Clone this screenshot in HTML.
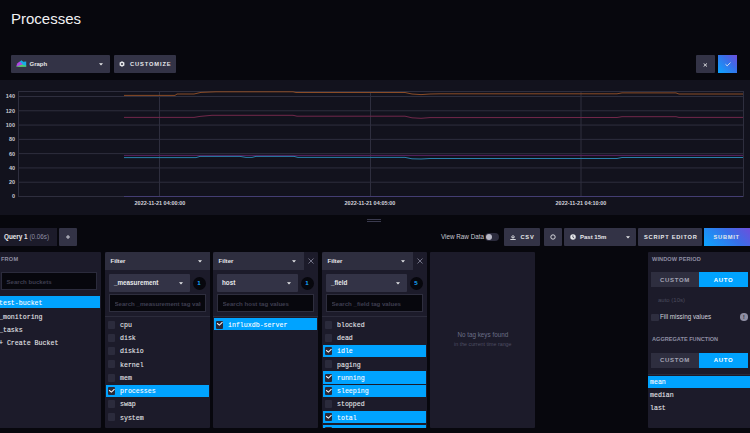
<!DOCTYPE html>
<html><head><meta charset="utf-8">
<style>
*{box-sizing:border-box;margin:0;padding:0}
html,body{width:750px;height:433px;overflow:hidden;background:#07070d;font-family:"Liberation Sans",sans-serif;color:#e7e8eb}
.a{position:absolute}
.btn{position:absolute;background:#333346;border-radius:1px}
.t{position:absolute;white-space:nowrap;line-height:1}
.mono{font-family:"Liberation Mono",monospace}
.cap{font-weight:bold;text-transform:uppercase;letter-spacing:0.6px}
.panel{position:absolute;background:#1c1b2a;top:252px;height:176px;border-radius:1px}
.sel{position:absolute;background:#00a3ff}
.cb{position:absolute;width:8px;height:8px;background:#2b2b3c;border-radius:1px}
.item{position:absolute;font-family:"Liberation Mono",monospace;font-size:6.6px;font-weight:normal;-webkit-text-stroke:0.08px currentColor;color:#e7e8eb;line-height:1;white-space:nowrap}
</style></head><body>

<!-- Title -->
<div class="t" style="left:11px;top:11px;font-size:15px;color:#f1f1f3">Processes</div>

<!-- Graph dropdown -->
<div class="btn" style="left:11px;top:55px;width:99px;height:18px"></div>
<svg class="a" style="left:16px;top:60.2px" width="11" height="7" viewBox="0 0 11 7">
  <path d="M3.5 1.8 L5.5 0.3 L7.2 1.8 L10.2 1.4 L10.2 6.6 L3.5 6.6Z" fill="#17ade6"/>
  <path d="M0.3 6.2 L1.2 3.6 L3 2 L4.2 1.8 L5.8 3.4 L7 5 L5 6.6 L0.3 6.6Z" fill="#b048e6"/>
  <path d="M0.5 6.6 L2.8 5.7 L4.8 5 L6.2 4.4 L8 5.5 L10.2 5.4 L10.2 6.8 L0.3 6.8Z" fill="#58d060"/>
</svg>
<div class="t" style="left:29.5px;top:61px;font-size:6px;font-weight:bold">Graph</div>
<svg class="a" style="left:98.5px;top:62.5px" width="4" height="3"><path d="M0 0.3 L4 0.3 L2 2.6Z" fill="#e7e8eb"/></svg>

<!-- Customize -->
<div class="btn" style="left:114px;top:55px;width:62px;height:18px"></div>
<svg class="a" style="left:119px;top:61px" width="6" height="6" viewBox="0 0 6 6"><path d="M3 0.2 L5.4 1.6 L5.4 4.4 L3 5.8 L0.6 4.4 L0.6 1.6Z" fill="#e7e8eb"/><circle cx="3" cy="3" r="1" fill="#333346"/></svg>
<div class="t cap" style="left:130px;top:61.9px;font-size:5.7px;letter-spacing:0.9px">Customize</div>

<!-- cancel / confirm -->
<div class="btn" style="left:696px;top:55px;width:19px;height:18px"></div>
<svg class="a" style="left:703px;top:62.5px" width="5" height="4"><path d="M0.6 0.4 L4 3.6 M4 0.4 L0.6 3.6" stroke="#e7e8eb" stroke-width="0.9"/></svg>
<div class="a" style="left:718px;top:55px;width:19px;height:18px;background:linear-gradient(45deg,#0ba6ff 0%,#3a6ee8 60%,#6d4fdc 100%)"></div>
<svg class="a" style="left:724.5px;top:62.3px" width="6" height="5"><path d="M0.5 2.3 L2.2 3.8 L5.5 0.6" stroke="#e7e8eb" stroke-width="0.9" fill="none"/></svg>

<!-- Graph area -->
<div class="a" style="left:0;top:80px;width:750px;height:135px;background:#12121d"></div>

<svg class="a" style="left:0;top:0" width="750" height="433">
  <g stroke="#2e2e3e" stroke-width="1" fill="none">
    <rect x="18.5" y="91.5" width="725" height="105"/>
    <line x1="18" y1="96.50" x2="744" y2="96.50"/>
    <line x1="18" y1="110.79" x2="744" y2="110.79"/>
    <line x1="18" y1="125.07" x2="744" y2="125.07"/>
    <line x1="18" y1="139.36" x2="744" y2="139.36"/>
    <line x1="18" y1="153.64" x2="744" y2="153.64"/>
    <line x1="18" y1="167.93" x2="744" y2="167.93"/>
    <line x1="18" y1="182.21" x2="744" y2="182.21"/>
    <line x1="159.5" y1="91" x2="159.5" y2="197"/>
    <line x1="370.5" y1="91" x2="370.5" y2="197"/>
    <line x1="581" y1="91" x2="581" y2="197"/>
  </g>
  <g fill="none" stroke-width="1">
    <path stroke="#8a4c26" d="M124 95.4 L175 95.4 L177 94 L194 94 L201 92.4 L216 91.8 L293 91.8 L296 92.5 L405 92.5 L412 94 L421 94.6 L430 94 L440 93.8 L617 93.8 L622 92.9 L676 92.9 L679 94 L743 94"/>
    <path stroke="#72284a" d="M124 117.4 L194 117.4 L200 116.4 L212 115.3 L293 115.3 L297 116.2 L405 116.2 L412 117.8 L421 118.3 L430 117.6 L617 117.5 L622 116.7 L676 116.7 L679 117.4 L743 117.4"/>
    <path stroke="#5a2260" d="M124 155.4 L743 155.4"/>
    <path stroke="#2a7fab" d="M124 157.6 L196 157.6 L200 156.4 L240 156.4 L246 157.4 L252 157.4 L256 156.4 L294 156.4 L298 157.4 L405 157.4 L412 158.8 L421 159 L430 158.5 L617 158.5 L622 157.5 L743 157.5"/>
    <path stroke="#433d72" d="M124 196.5 L743 196.5"/>
  </g>
</svg>

<!-- Y labels -->
<div class="t" style="left:0;width:15px;text-align:right;top:94.1px;font-size:5.5px;font-weight:bold;color:#c9cad3">140</div>
<div class="t" style="left:0;width:15px;text-align:right;top:108.6px;font-size:5.5px;font-weight:bold;color:#c9cad3">120</div>
<div class="t" style="left:0;width:15px;text-align:right;top:123.1px;font-size:5.5px;font-weight:bold;color:#c9cad3">100</div>
<div class="t" style="left:0;width:15px;text-align:right;top:137.1px;font-size:5.5px;font-weight:bold;color:#c9cad3">80</div>
<div class="t" style="left:0;width:15px;text-align:right;top:151.6px;font-size:5.5px;font-weight:bold;color:#c9cad3">60</div>
<div class="t" style="left:0;width:15px;text-align:right;top:165.6px;font-size:5.5px;font-weight:bold;color:#c9cad3">40</div>
<div class="t" style="left:0;width:15px;text-align:right;top:180.1px;font-size:5.5px;font-weight:bold;color:#c9cad3">20</div>
<div class="t" style="left:0;width:15px;text-align:right;top:194.1px;font-size:5.5px;font-weight:bold;color:#c9cad3">0</div>

<!-- X labels -->
<div class="t" style="left:110px;width:100px;text-align:center;top:201.4px;font-size:5.45px;font-weight:bold;color:#d2d2dc">2022-11-21 04:00:00</div>
<div class="t" style="left:320px;width:100px;text-align:center;top:201.4px;font-size:5.45px;font-weight:bold;color:#d2d2dc">2022-11-21 04:05:00</div>
<div class="t" style="left:531px;width:100px;text-align:center;top:201.4px;font-size:5.45px;font-weight:bold;color:#d2d2dc">2022-11-21 04:10:00</div>

<!-- handle -->
<div class="a" style="left:367px;top:219px;width:14px;height:1px;background:#3a3a4e"></div>
<div class="a" style="left:367px;top:221px;width:14px;height:1px;background:#3a3a4e"></div>

<!-- Query tabs -->
<div class="a" style="left:0;top:228px;width:57px;height:18px;background:#1c1b2a"></div>
<div class="t" style="left:4px;top:234.2px;font-size:6.35px;font-weight:bold">Query 1 <span style="font-weight:normal;color:#8e8ea3">(0.06s)</span></div>
<div class="btn" style="left:59px;top:228px;width:18px;height:18px"></div>
<svg class="a" style="left:66px;top:235px" width="4" height="4"><path d="M2 0 V4 M0 2 H4" stroke="#c9cad3" stroke-width="1"/></svg>

<!-- toolbar right -->
<div class="t" style="left:441px;top:234px;font-size:6.3px;color:#c9cad3">View Raw Data</div>
<div class="a" style="left:484.5px;top:233.3px;width:14px;height:8px;border-radius:4px;background:#2b2b3c"></div>
<div class="a" style="left:485.5px;top:234.3px;width:6px;height:6px;border-radius:3px;background:#b9b9c6"></div>

<div class="btn" style="left:504px;top:228px;width:36px;height:18px"></div>
<svg class="a" style="left:510px;top:235px" width="6" height="5"><path d="M3 0 V3 M1 1.5 L3 3.3 L5 1.5 M0.3 4.5 H5.7" stroke="#e7e8eb" stroke-width="0.9" fill="none"/></svg>
<div class="t cap" style="left:520.5px;top:234.6px;font-size:5.7px;letter-spacing:0.75px">CSV</div>

<div class="btn" style="left:544px;top:228px;width:18px;height:18px"></div>
<svg class="a" style="left:549.6px;top:234.4px" width="6" height="6"><circle cx="3" cy="3" r="2.2" stroke="#e7e8eb" stroke-width="0.9" fill="none"/></svg>

<div class="btn" style="left:564px;top:228px;width:72px;height:18px"></div>
<svg class="a" style="left:569.6px;top:234.4px" width="6" height="6"><circle cx="3" cy="3" r="2.75" fill="#e7e8eb"/><path d="M2.9 1.4 V3.2 L4.3 4.1" stroke="#333346" stroke-width="0.8" fill="none"/></svg>
<div class="t" style="left:580px;top:234px;font-size:6px;font-weight:bold">Past 15m</div>
<svg class="a" style="left:625.5px;top:236px" width="4" height="3"><path d="M0 0.3 L4 0.3 L2 2.6Z" fill="#e7e8eb"/></svg>

<div class="btn" style="left:638px;top:228px;width:64px;height:18px"></div>
<div class="t cap" style="left:644px;top:234.6px;font-size:5.7px;letter-spacing:0.75px">Script Editor</div>

<div class="a" style="left:704px;top:228px;width:46px;height:18px;background:linear-gradient(45deg,#0ba6ff 0%,#3a6ee8 60%,#6d4fdc 100%)"></div>
<div class="t cap" style="left:713.5px;top:234.6px;font-size:5.7px;letter-spacing:0.75px">Submit</div>

<div class="panel" style="left:-4px;width:105px"></div>
<div class="t cap" style="left:1px;top:257px;font-size:5.6px;color:#8e8ea3;letter-spacing:0.2px">From</div>
<div class="a" style="left:1px;top:272px;width:96px;height:18px;background:#07070d;border:1px solid #2b2b3c"></div>
<div class="t" style="left:6.5px;top:279px;font-size:6.1px;font-weight:bold;color:#3e3e50">Search buckets</div>
<div class="sel" style="left:-4px;top:296px;width:104px;height:12.4px"></div>
<div class="item" style="left:-1px;top:301.40px;color:#fff">test-bucket</div>
<div class="item" style="left:-1px;top:314.68px;">_monitoring</div>
<div class="item" style="left:-1px;top:327.96px;">_tasks</div>
<div class="item" style="left:-1px;top:341.24px;">+ Create Bucket</div>
<div class="panel" style="left:105px;width:105px"></div>
<div class="a" style="left:105px;top:252px;width:105px;height:18px;background:#2e2e3f;border-radius:2px 0 0 0"></div>
<div class="t" style="left:110.5px;top:258.3px;font-size:6.1px;font-weight:bold">Filter</div>
<svg class="a" style="left:198px;top:259.5px" width="4" height="3"><path d="M0 0.3 L4 0.3 L2 2.6Z" fill="#e7e8eb"/></svg>
<div class="btn" style="left:109px;top:274px;width:81px;height:18px"></div>
<div class="t" style="left:114px;top:280px;font-size:6.3px;font-weight:bold">_measurement</div>
<svg class="a" style="left:178.5px;top:281.5px" width="4" height="3"><path d="M0 0.3 L4 0.3 L2 2.6Z" fill="#e7e8eb"/></svg>
<div class="a" style="left:192.5px;top:276.5px;width:13px;height:13px;border-radius:50%;background:#07070d"></div>
<div class="t" style="left:192.5px;width:13px;text-align:center;top:280.2px;font-size:6.2px;font-weight:bold;color:#14a8ff">1</div>
<div class="a" style="left:109px;top:294px;width:97px;height:18px;background:#07070d;border:1px solid #2e2e3e"></div>
<div class="t" style="left:114.5px;top:300.6px;font-size:6.1px;font-weight:bold;color:#3e3e50;overflow:hidden;width:86.5px">Search _measurement tag values</div>
<div class="a" style="left:105px;top:316px;width:105px;height:1px;background:#2b2b3b"></div>
<div class="cb" style="left:107.9px;width:7.2px;top:320.50px;background:#2b2b3c"></div>
<div class="item" style="left:120px;top:322.70px;">cpu</div>
<div class="cb" style="left:107.9px;width:7.2px;top:333.78px;background:#2b2b3c"></div>
<div class="item" style="left:120px;top:335.98px;">disk</div>
<div class="cb" style="left:107.9px;width:7.2px;top:347.06px;background:#2b2b3c"></div>
<div class="item" style="left:120px;top:349.26px;">diskio</div>
<div class="cb" style="left:107.9px;width:7.2px;top:360.34px;background:#2b2b3c"></div>
<div class="item" style="left:120px;top:362.54px;">kernel</div>
<div class="cb" style="left:107.9px;width:7.2px;top:373.62px;background:#2b2b3c"></div>
<div class="item" style="left:120px;top:375.82px;">mem</div>
<div class="sel" style="left:106px;top:384.70px;width:103px;height:12.2px"></div>
<div class="cb" style="left:107.9px;width:7.2px;top:386.90px;background:#2a2937"></div>
<svg class="a" style="left:108px;top:387.70px" width="7" height="6"><path d="M1.1 2.3 L3.4 4.1 L6.5 1.2" stroke="#f4f4f6" stroke-width="1.1" fill="none"/></svg>
<div class="item" style="left:120px;top:389.10px;color:#fff">processes</div>
<div class="cb" style="left:107.9px;width:7.2px;top:400.18px;background:#2b2b3c"></div>
<div class="item" style="left:120px;top:402.38px;">swap</div>
<div class="cb" style="left:107.9px;width:7.2px;top:413.46px;background:#2b2b3c"></div>
<div class="item" style="left:120px;top:415.66px;">system</div>
<div class="panel" style="left:213px;width:105px"></div>
<div class="a" style="left:213px;top:252px;width:91px;height:18px;background:#2e2e3f;border-radius:2px 0 0 0"></div>
<div class="t" style="left:218.5px;top:258.3px;font-size:6.1px;font-weight:bold">Filter</div>
<svg class="a" style="left:292px;top:259.5px" width="4" height="3"><path d="M0 0.3 L4 0.3 L2 2.6Z" fill="#e7e8eb"/></svg>
<svg class="a" style="left:308px;top:258px" width="6" height="6"><path d="M0.5 0.5 L5.5 5.5 M5.5 0.5 L0.5 5.5" stroke="#8a8a9e" stroke-width="0.8"/></svg>
<div class="btn" style="left:217px;top:274px;width:81px;height:18px"></div>
<div class="t" style="left:222px;top:280px;font-size:6.3px;font-weight:bold">host</div>
<svg class="a" style="left:286.5px;top:281.5px" width="4" height="3"><path d="M0 0.3 L4 0.3 L2 2.6Z" fill="#e7e8eb"/></svg>
<div class="a" style="left:300.5px;top:276.5px;width:13px;height:13px;border-radius:50%;background:#07070d"></div>
<div class="t" style="left:300.5px;width:13px;text-align:center;top:280.2px;font-size:6.2px;font-weight:bold;color:#14a8ff">1</div>
<div class="a" style="left:217px;top:294px;width:97px;height:18px;background:#07070d;border:1px solid #2e2e3e"></div>
<div class="t" style="left:222.5px;top:300.6px;font-size:6.1px;font-weight:bold;color:#3e3e50;overflow:hidden;width:86.5px">Search host tag values</div>
<div class="a" style="left:213px;top:316px;width:105px;height:1px;background:#2b2b3b"></div>
<div class="sel" style="left:214px;top:318.30px;width:103px;height:12.2px"></div>
<div class="cb" style="left:215.9px;width:7.2px;top:320.50px;background:#2a2937"></div>
<svg class="a" style="left:216px;top:321.30px" width="7" height="6"><path d="M1.1 2.3 L3.4 4.1 L6.5 1.2" stroke="#f4f4f6" stroke-width="1.1" fill="none"/></svg>
<div class="item" style="left:228px;top:322.70px;color:#fff">influxdb-server</div>
<div class="panel" style="left:322px;width:105px"></div>
<div class="a" style="left:322px;top:252px;width:91px;height:18px;background:#2e2e3f;border-radius:2px 0 0 0"></div>
<div class="t" style="left:327.5px;top:258.3px;font-size:6.1px;font-weight:bold">Filter</div>
<svg class="a" style="left:401px;top:259.5px" width="4" height="3"><path d="M0 0.3 L4 0.3 L2 2.6Z" fill="#e7e8eb"/></svg>
<svg class="a" style="left:417px;top:258px" width="6" height="6"><path d="M0.5 0.5 L5.5 5.5 M5.5 0.5 L0.5 5.5" stroke="#8a8a9e" stroke-width="0.8"/></svg>
<div class="btn" style="left:326px;top:274px;width:81px;height:18px"></div>
<div class="t" style="left:331px;top:280px;font-size:6.3px;font-weight:bold">_field</div>
<svg class="a" style="left:395.5px;top:281.5px" width="4" height="3"><path d="M0 0.3 L4 0.3 L2 2.6Z" fill="#e7e8eb"/></svg>
<div class="a" style="left:409.5px;top:276.5px;width:13px;height:13px;border-radius:50%;background:#07070d"></div>
<div class="t" style="left:409.5px;width:13px;text-align:center;top:280.2px;font-size:6.2px;font-weight:bold;color:#14a8ff">5</div>
<div class="a" style="left:326px;top:294px;width:97px;height:18px;background:#07070d;border:1px solid #2e2e3e"></div>
<div class="t" style="left:331.5px;top:300.6px;font-size:6.1px;font-weight:bold;color:#3e3e50;overflow:hidden;width:86.5px">Search _field tag values</div>
<div class="a" style="left:322px;top:316px;width:105px;height:1px;background:#2b2b3b"></div>
<div class="cb" style="left:324.9px;width:7.2px;top:320.50px;background:#2b2b3c"></div>
<div class="item" style="left:337px;top:322.70px;">blocked</div>
<div class="cb" style="left:324.9px;width:7.2px;top:333.78px;background:#2b2b3c"></div>
<div class="item" style="left:337px;top:335.98px;">dead</div>
<div class="sel" style="left:323px;top:344.86px;width:103px;height:12.2px"></div>
<div class="cb" style="left:324.9px;width:7.2px;top:347.06px;background:#2a2937"></div>
<svg class="a" style="left:325px;top:347.86px" width="7" height="6"><path d="M1.1 2.3 L3.4 4.1 L6.5 1.2" stroke="#f4f4f6" stroke-width="1.1" fill="none"/></svg>
<div class="item" style="left:337px;top:349.26px;color:#fff">idle</div>
<div class="cb" style="left:324.9px;width:7.2px;top:360.34px;background:#2b2b3c"></div>
<div class="item" style="left:337px;top:362.54px;">paging</div>
<div class="sel" style="left:323px;top:371.42px;width:103px;height:12.2px"></div>
<div class="cb" style="left:324.9px;width:7.2px;top:373.62px;background:#2a2937"></div>
<svg class="a" style="left:325px;top:374.42px" width="7" height="6"><path d="M1.1 2.3 L3.4 4.1 L6.5 1.2" stroke="#f4f4f6" stroke-width="1.1" fill="none"/></svg>
<div class="item" style="left:337px;top:375.82px;color:#fff">running</div>
<div class="sel" style="left:323px;top:384.70px;width:103px;height:12.2px"></div>
<div class="cb" style="left:324.9px;width:7.2px;top:386.90px;background:#2a2937"></div>
<svg class="a" style="left:325px;top:387.70px" width="7" height="6"><path d="M1.1 2.3 L3.4 4.1 L6.5 1.2" stroke="#f4f4f6" stroke-width="1.1" fill="none"/></svg>
<div class="item" style="left:337px;top:389.10px;color:#fff">sleeping</div>
<div class="cb" style="left:324.9px;width:7.2px;top:400.18px;background:#2b2b3c"></div>
<div class="item" style="left:337px;top:402.38px;">stopped</div>
<div class="sel" style="left:323px;top:411.26px;width:103px;height:12.2px"></div>
<div class="cb" style="left:324.9px;width:7.2px;top:413.46px;background:#2a2937"></div>
<svg class="a" style="left:325px;top:414.26px" width="7" height="6"><path d="M1.1 2.3 L3.4 4.1 L6.5 1.2" stroke="#f4f4f6" stroke-width="1.1" fill="none"/></svg>
<div class="item" style="left:337px;top:415.66px;color:#fff">total</div>
<div class="sel" style="left:323px;top:424.54px;width:103px;height:12.2px"></div>
<div class="cb" style="left:324.9px;width:7.2px;top:426.74px;background:#2a2937"></div>
<svg class="a" style="left:325px;top:427.54px" width="7" height="6"><path d="M1.1 2.3 L3.4 4.1 L6.5 1.2" stroke="#f4f4f6" stroke-width="1.1" fill="none"/></svg>
<div class="item" style="left:337px;top:428.94px;color:#fff">total_threads</div>
<div class="panel" style="left:430.3px;width:105px"></div>
<div class="t" style="left:430.3px;width:105px;text-align:center;top:332px;font-size:6.3px;color:#6b6f88">No tag keys found</div>
<div class="t" style="left:430.3px;width:105px;text-align:center;top:342.2px;font-size:5.3px;color:#4e4e62">in the current time range</div>
<div class="panel" style="left:648px;width:106px"></div>
<div class="t cap" style="left:652px;top:257px;font-size:5.6px;color:#8e8ea3;letter-spacing:0.1px">Window Period</div>
<div class="a" style="left:651px;top:272px;width:48px;height:15px;background:#2e2e3f"></div>
<div class="a" style="left:699px;top:272px;width:49px;height:15px;background:#00a3ff"></div>
<div class="t cap" style="left:651px;width:48px;text-align:center;top:276.5px;font-size:6px;color:#a4a4b5;letter-spacing:0.7px">Custom</div>
<div class="t cap" style="left:699px;width:49px;text-align:center;top:276.5px;font-size:6px;color:#fff;letter-spacing:0.7px">Auto</div>
<div class="t" style="left:658px;top:297px;font-size:6px;color:#4a4a5c">auto (10s)</div>
<div class="cb" style="left:651px;top:313.5px;width:7.5px;height:7.5px;background:#2e2e3f"></div>
<div class="t" style="left:660px;top:314px;font-size:6.3px;color:#d0d0da">Fill missing values</div>
<div class="a" style="left:740px;top:313.3px;width:7.5px;height:7.5px;border-radius:50%;background:#8e8ea3"></div>
<div class="t" style="left:740px;width:7.5px;text-align:center;top:314.6px;font-size:5px;font-weight:bold;color:#1c1c29">!</div>
<div class="t cap" style="left:652px;top:337px;font-size:5.6px;color:#8e8ea3;letter-spacing:0px">Aggregate Function</div>
<div class="a" style="left:651px;top:352.5px;width:48px;height:15px;background:#2e2e3f"></div>
<div class="a" style="left:699px;top:352.5px;width:49px;height:15px;background:#00a3ff"></div>
<div class="t cap" style="left:651px;width:48px;text-align:center;top:357px;font-size:6px;color:#a4a4b5;letter-spacing:0.7px">Custom</div>
<div class="t cap" style="left:699px;width:49px;text-align:center;top:357px;font-size:6px;color:#fff;letter-spacing:0.7px">Auto</div>
<div class="a" style="left:648px;top:374px;width:102px;height:1px;background:#2b2b3b"></div>
<div class="sel" style="left:648px;top:375.5px;width:102px;height:12px"></div>
<div class="item" style="left:650px;top:379.90px;color:#fff">mean</div>
<div class="item" style="left:650px;top:393.18px;">median</div>
<div class="item" style="left:650px;top:406.46px;">last</div>
<div class="a" style="left:0;top:428px;width:750px;height:5px;background:#07070d"></div>
</body></html>
